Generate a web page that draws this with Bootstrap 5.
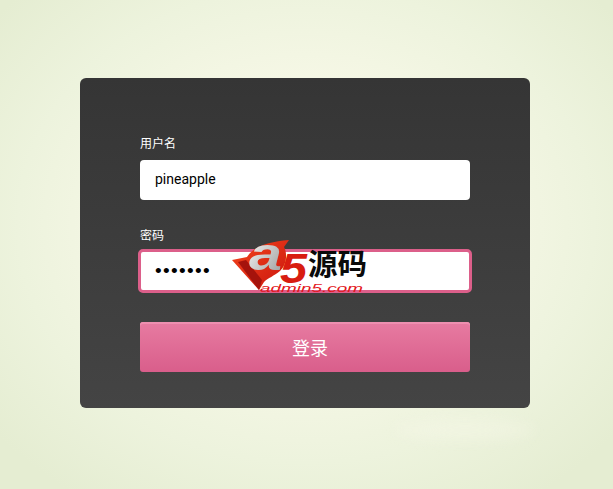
<!DOCTYPE html>
<html lang="zh">
<head>
<meta charset="utf-8">
<title>登录</title>
<link href="https://cdn.jsdelivr.net/npm/bootstrap@5.3.0/dist/css/bootstrap.min.css" rel="stylesheet">
<style>
html,body{height:100%;}
body{margin:0;height:489px;overflow:hidden;position:relative;
  background:radial-gradient(ellipse 400px 330px at 306px 225px,#f8f9ec 0%,#f5f7e5 45%,#edf3dd 72%,#e5edd2 100%);
  font-family:"Liberation Sans","Noto Sans CJK SC",sans-serif;}
.stage{padding-top:78px;padding-left:80px;}
.panel{width:450px;height:330px;padding:55px 60px 0;border-radius:6px;
  background:linear-gradient(#353535,#444444);}
.fieldlabel{display:block;color:#fff;font-size:12px;line-height:20px;height:20px;margin-bottom:7px;font-family:"Noto Sans CJK SC",sans-serif;font-weight:400;}
.plainfield{display:block;width:330px;height:40px;border:0;border-radius:4px;background:#fff;color:#000;
  padding:0 15px 2px;font:400 14px/38px Roboto,"Liberation Sans",sans-serif;outline:0;}
.focusfield{display:block;width:334px;height:44px;margin:0 -2px;border:3px solid #dc5f8a;border-radius:5px;background:#fff;color:#000;
  padding:0 14px;font-size:19px;outline:0;letter-spacing:1.35px;}
.gap-a{height:25px;}
.gap-b{height:29px;}
.loginbtn{display:block;width:330px;height:50px;border:0;border-radius:3px;padding:0 0 0 10px;color:#fff;font-size:18px;font-family:"Noto Sans CJK SC",sans-serif;font-weight:400;
  background:linear-gradient(#e77ba1,#d95e8b);box-shadow:inset 0 2px 0 #ee8fb0;}
.a5mark{position:absolute;left:230px;top:222px;width:140px;height:74px;}
.glow{position:absolute;left:395px;top:420px;width:140px;height:20px;border-radius:50%;background:rgba(248,250,236,.35);filter:blur(7px);}
</style>
</head>
<body>
<div class="stage">
  <form class="panel">
    <label class="fieldlabel" for="u">用户名</label>
    <input id="u" class="plainfield" type="text" value="pineapple">
    <div class="gap-a"></div>
    <label class="fieldlabel mb-1" for="p">密码</label>
    <input id="p" class="focusfield" type="password" value="1234567">
    <div class="gap-b"></div>
    <button type="button" class="loginbtn">登录</button>
  </form>
</div>
<div class="glow"></div>
<svg class="a5mark" viewBox="0 -16 140 74" aria-label="a5源码 admin5.com">
  <defs>
    <linearGradient id="r" x1="0" y1="0" x2="1" y2="1"><stop offset="0" stop-color="#f4461d"/><stop offset="1" stop-color="#c9140e"/></linearGradient>
    <linearGradient id="s" x1="0" y1="0" x2="1" y2="1"><stop offset="0" stop-color="#fff"/><stop offset="1" stop-color="#999"/></linearGradient>
  </defs>
  <path d="M2 22 L17 19 C24 8 38 4 59 2 L54 9 C58 16 56 28 50 33 C44 38 38 40 34 44 L29 52 Z" fill="url(#r)"/>
  <path d="M8 24 L16 22 L32 42 L29 52 Z" fill="#a5130c"/>
  <text x="19" y="32" font-family="Liberation Sans,sans-serif" font-weight="700" font-style="italic" font-size="46" fill="url(#s)" textLength="33" lengthAdjust="spacingAndGlyphs">a</text>
  <text x="50" y="45" font-family="Liberation Sans,sans-serif" font-weight="700" font-style="italic" font-size="43" fill="#d81c10" textLength="27" lengthAdjust="spacingAndGlyphs">5</text>
  <text x="78" y="37" font-family="Noto Sans CJK SC,sans-serif" font-weight="700" font-size="29" fill="#0a0a0a" textLength="59" lengthAdjust="spacingAndGlyphs">源码</text>
  <text x="30" y="54" font-family="Liberation Sans,sans-serif" font-style="italic" font-size="11" fill="#e3161a" textLength="103" lengthAdjust="spacingAndGlyphs">admin5.com</text>
</svg>
<script src="https://cdn.jsdelivr.net/npm/bootstrap@5.3.0/dist/js/bootstrap.bundle.min.js"></script>
</body>
</html>
